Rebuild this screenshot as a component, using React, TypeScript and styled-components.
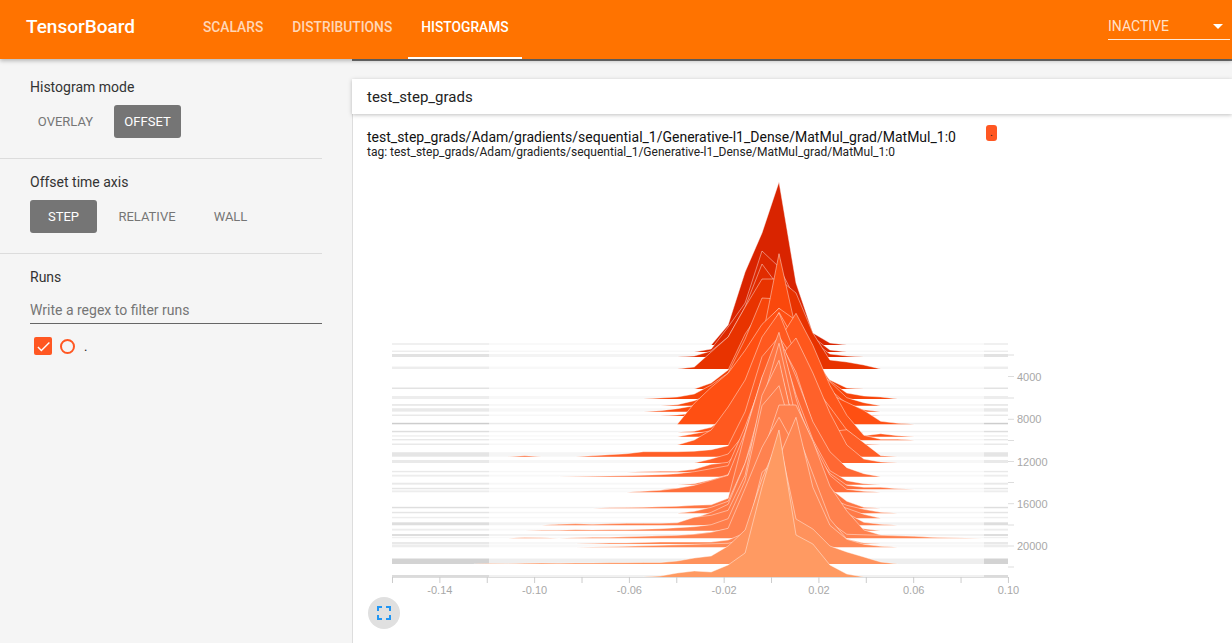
import React, { FC } from 'react'
import styled, { createGlobalStyle } from 'styled-components'
import { MdFullscreen, MdCheck } from 'react-icons/md'

const GlobalStyle = createGlobalStyle`
  html, body {
    margin: 0;
    padding: 0;
    height: 643px;
    overflow: hidden;
    background: #f5f5f5;
    font-family: Roboto, "Liberation Sans", sans-serif;
  }
`

const Page = styled.div`
  width: 1232px;
  height: 643px;
  display: flex;
  flex-direction: column;
  overflow: hidden;
`

const Header = styled.header`
  position: relative;
  z-index: 2;
  flex: none;
  height: 59px;
  background: #ff7300;
  display: flex;
  align-items: stretch;
  padding: 0 2px 0 26px;
  box-shadow: 0 2px 4px rgba(0, 0, 0, 0.25);
`

const Logo = styled.div`
  width: 164px;
  line-height: 54px;
  color: #fff;
  font-size: 19px;
  font-weight: 500;
`

const Tabs = styled.nav`
  display: flex;
  flex: 1;
`

const Tab = styled.a<{ $active?: boolean }>`
  padding: 0 13px;
  margin-right: 3px;
  line-height: 54px;
  height: 57px;
  font-size: 13.8px;
  font-weight: 500;
  color: ${p => (p.$active ? '#fff' : 'rgba(255, 255, 255, 0.72)')};
  border-bottom: 2px solid ${p => (p.$active ? '#fff' : 'transparent')};
`

const Select = styled.div`
  align-self: flex-start;
  margin-top: 16px;
  width: 122px;
  height: 24px;
  box-sizing: border-box;
  border-bottom: 1px solid rgba(255, 255, 255, 0.85);
  display: flex;
  justify-content: space-between;
  color: rgba(255, 255, 255, 0.8);
  font-size: 14px;
  line-height: 21px;
`

const Caret = styled.span`
  width: 0;
  height: 0;
  margin: 8px 7px 0 0;
  border-left: 5px solid transparent;
  border-right: 5px solid transparent;
  border-top: 5px solid #fff;
`

const Body = styled.div`
  flex: 1;
  display: flex;
  min-height: 0;
`

const Sidebar = styled.aside`
  flex: none;
  width: 352px;
  box-sizing: border-box;
  padding-right: 30px;
  background: #f5f5f5;
`

const Section = styled.section<{ $divider?: boolean }>`
  padding: 15px 0 15px 30px;
  height: 95px;
  box-sizing: border-box;
  border-bottom: ${p => (p.$divider ? '1px solid #dcdcdc' : 'none')};

  &:first-child {
    height: 100px;
    padding-top: 20px;
  }
`

const Label = styled.div`
  color: #333;
  font-size: 14px;
  line-height: 16px;
  margin-bottom: 10px;
`

const Buttons = styled.div<{ $gap: number }>`
  display: flex;
  gap: ${p => p.$gap}px;
`

const ModeButton = styled.div<{ $active?: boolean; $width?: number }>`
  width: ${p => p.$width ?? 67}px;
  height: 33px;
  line-height: 33px;
  text-align: center;
  border-radius: 3px;
  font-size: 13px;
  background: ${p => (p.$active ? '#757575' : 'transparent')};
  color: ${p => (p.$active ? '#fff' : '#757575')};
`

const FilterInput = styled.div`
  margin-top: 17px;
  height: 21px;
  font-size: 14px;
  line-height: 16px;
  color: #757575;
  border-bottom: 1px solid #666;
`

const RunRow = styled.div`
  display: flex;
  align-items: center;
  margin: 13px 0 0 4px;
  font-size: 13px;
  color: #222;
`

const CheckBox = styled.span`
  width: 18px;
  height: 18px;
  border-radius: 2px;
  background: #ff5722;
  color: #fff;
  display: flex;
  align-items: center;
  justify-content: center;
`

const RunDot = styled.span`
  width: 11px;
  height: 11px;
  margin: 0 9px 0 8px;
  border: 2px solid #ff5722;
  border-radius: 50%;
`

const Main = styled.main`
  flex: 1;
  min-width: 0;
  display: flex;
  flex-direction: column;
  padding-top: 18px;
  background: #f5f5f5;
  border-top: 2px solid #707070;
`

const SectionHeader = styled.div`
  position: relative;
  z-index: 1;
  flex: none;
  height: 35px;
  padding-left: 15px;
  background: #fff;
  font-size: 15px;
  line-height: 36px;
  color: #222;
  box-shadow: 0 1px 4px rgba(0, 0, 0, 0.25);
`

const Card = styled.div`
  flex: 1;
  background: #fff;
  border-left: 1px solid #ddd;
  min-height: 0;
`

const CardHead = styled.div`
  display: flex;
  align-items: flex-start;
  height: 51px;
  padding: 11px 0 0 14px;
  box-sizing: border-box;
`

const CardTitle = styled.div`
  width: 619px;
  padding-top: 4px;
  font-size: 14px;
  line-height: 16px;
  color: #111;
`

const CardTag = styled.div`
  font-size: 12px;
  line-height: 14px;
  color: #222;
  white-space: nowrap;
`

const RunChip = styled.span`
  width: 11px;
  height: 16px;
  background: #ff5722;
  border-radius: 3px;
  color: #222;
  font-size: 11px;
  line-height: 15px;
  text-align: center;
`

const ChartSvg = styled.svg`
  display: block;
  width: 879px;
  height: 436px;
`

const AxisText = styled.text`
  font-family: "Liberation Sans", Arial, sans-serif;
  font-size: 11px;
  fill: #a8a8a8;
`

const ExpandButton = styled.div`
  width: 32px;
  height: 32px;
  margin: -4px 0 0 15px;
  border-radius: 50%;
  background: #e0e0e0;
  color: #2196f3;
  display: flex;
  align-items: center;
  justify-content: center;
`

// heights of the histogram bins, `from` is the bin index relative to the centre (x = 779)
interface Ridge {
  y: number
  from: number
  h: number[]
  band?: [number, number]
}

const ridges: Ridge[] = [
  { y: 345, from: -4, h: [0, 20, 73, 112, 163, 62, 12, 2, 0], band: [2, 0.04] },
  { y: 352, from: -5, h: [0, 3, 25, 49, 101, 85, 52, 15, 2, 0], band: [1.5, 0.05] },
  { y: 357, from: -6, h: [0, 1, 6, 20, 50, 93, 70, 45, 16, 3, 1, 0], band: [3, 0.08] },
  { y: 369, from: -6, h: [0, 2, 17, 32, 62, 90, 90, 76, 36, 9, 7, 4, 0], band: [2.5, 0.05] },
  { y: 389, from: -5, h: [0, 6, 19, 55, 80, 85, 60, 25, 9, 1, 0], band: [1.5, 0.08] },
  { y: 399, from: -8, h: [0, 1, 2, 5, 14, 26, 60, 101, 100, 70, 45, 18, 6, 3, 2, 0], band: [3, 0.05] },
  { y: 405.7, from: -7, h: [0, 1, 5, 12, 28, 30, 66, 152, 76, 40, 24, 8, 3, 0], band: [1.5, 0.08] },
  { y: 411.7, from: -8, h: [0, 1, 3, 6, 14, 30, 60, 80, 90, 70, 40, 22, 8, 2, 0], band: [3.5, 0.06] },
  { y: 416, from: -7, h: [0, 1, 3, 8, 25, 52, 89, 108, 85, 50, 24, 10, 1, 0], band: [1.5, 0.06] },
  { y: 424.3, from: -6, h: [0, 21, 37, 51, 74, 100, 116, 104, 51, 30, 22, 14, 3, 1, 0], band: [1.5, 0.14] },
  { y: 432.3, from: -6, h: [0, 1, 5, 18, 46, 85, 120, 90, 55, 15, 2, 0], band: [1.5, 0.09] },
  { y: 436.7, from: -6, h: [0, 3, 6, 20, 42, 75, 100, 80, 45, 20, 8, 1, 3, 1, 0], band: [1.5, 0.05] },
  { y: 440.3, from: -5, h: [0, 4, 14, 32, 60, 100, 127, 95, 55, 25, 5, 1, 1, 0], band: [1, 0.09] },
  { y: 445, from: -6, h: [0, 5, 15, 38, 65, 108, 132, 90, 60, 38, 15, 1, 0], band: [1.5, 0.06] },
  { y: 456.7, from: -16, h: [0, 1, 0], band: [4.5, 0.07] },
  { y: 456.7, from: -12, h: [0, 1, 2, 3, 5, 5, 5, 5.5, 7, 11, 45, 100, 120, 95, 70, 25, 27, 14, 1, 0] },
  { y: 463, from: -5, h: [0, 4, 9, 30, 65, 105, 125, 90, 50, 18, 4, 1, 0], band: [3, 0.06] },
  { y: 472.3, from: -9, h: [0, 0.5, 1, 1, 3, 8, 10, 28, 90, 132, 100, 48, 12, 1, 0], band: [1.5, 0.06] },
  { y: 476.7, from: -13, h: [0, 0.3, 0.5, 0.8, 1, 1.5, 2, 3, 5, 8, 11, 50, 95, 140, 100, 55, 25, 9, 3, 0], band: [2, 0.05] },
  { y: 484.7, from: -6, h: [0, 1, 5, 10, 40, 85, 145, 90, 45, 14, 4, 1, 0], band: [2, 0.06] },
  { y: 489.3, from: -7, h: [0, 1, 3, 6, 14, 50, 110, 140, 80, 40, 16, 4, 2, 2, 0.5, 0], band: [1.5, 0.07] },
  { y: 492.3, from: -9, h: [0, 1, 2, 4, 7, 12, 17, 60, 115, 150, 90, 50, 17, 3, 1, 0], band: [2, 0.05] },
  { y: 508.3, from: -11, h: [0, 0.5, 0.8, 1, 1.5, 2, 3, 3.5, 10, 75, 131, 176, 110, 55, 20, 7, 1, 0], band: [1.5, 0.09] },
  { y: 513.3, from: -6, h: [0, 2, 6, 12, 50, 110, 170, 95, 50, 15, 8, 4, 1, 0], band: [1.5, 0.07] },
  { y: 518.3, from: -5, h: [0, 6, 14, 55, 105, 155, 85, 45, 15, 10, 4, 0], band: [1.5, 0.05] },
  { y: 525.3, from: -14, h: [0, 1, 1.5, 1, 1.5, 2, 2, 2, 2.5, 8, 10, 15, 50, 130, 165, 90, 45, 25, 12, 3, 1, 0], band: [3, 0.09] },
  { y: 530.7, from: -15, h: [0, 0.5, 0.5, 1, 0.8, 1, 1, 1.5, 2, 3, 4, 6, 12, 50, 125, 145, 85, 40, 20, 8, 2, 0], band: [2, 0.05] },
  { y: 536, from: -6, h: [0, 2, 4, 7, 14, 80, 131, 131, 95, 50, 25, 6, 1, 0], band: [2, 0.09] },
  { y: 538.3, from: -16, h: [0, 0.8, 0.5, 0, 0.5, 1, 1, 1.5, 2, 2.5, 3, 4, 6, 10, 50, 91, 121, 90, 50, 16, 4, 3.5, 3, 2.5, 2, 1, 0.5, 0.3, 0], band: [1.5, 0.04] },
  { y: 544, from: -12, h: [0, 0.5, 1, 1, 1.5, 2, 2, 2, 2, 4, 11, 25, 87, 115, 70, 25, 5, 1, 0], band: [2, 0.06] },
  { y: 547.3, from: -12, h: [0, 0.4, 0.6, 1, 1.5, 2, 2.5, 3, 3.5, 4, 8, 75, 90, 130, 60, 22, 8, 3, 1, 0], band: [3, 0.05] },
  { y: 564, from: -18, h: [0, 0.5, 0.3, 0.7, 0.9, 0.8, 1, 1, 1.2, 1.3, 1.5, 1.5, 3, 6, 8, 18, 34, 85, 125, 45, 35, 18, 12, 7, 2, 0], band: [5.5, 0.12] },
  { y: 577, from: -8, h: [0, 1, 4, 6, 5, 12, 24, 90, 147, 42, 33, 12, 3, 0], band: [2, 0.1] },
]

// colour goes from dark red at the oldest step to light orange at the newest
const colorStops: [number, number[]][] = [
  [345, [217, 36, 0]],
  [369, [232, 51, 0]],
  [405, [250, 72, 12]],
  [424, [255, 79, 18]],
  [492, [255, 111, 60]],
  [540, [255, 131, 80]],
  [577, [255, 154, 98]],
]

const ridgeColor = (y: number) => {
  let i = 0
  while (i < colorStops.length - 2 && y > colorStops[i + 1][0]) i++
  const [y0, c0] = colorStops[i]
  const [y1, c1] = colorStops[i + 1]
  const t = (y - y0) / (y1 - y0)
  return `rgb(${c0.map((c, k) => Math.round(c + (c1[k] - c) * t)).join(',')})`
}

const binX = (i: number) => 779 + i * 16.95

const RidgeShape: FC<{ ridge: Ridge }> = ({ ridge }) => {
  const { y, from, h, band } = ridge
  const top = h.map((v, i) => `${binX(from + i).toFixed(1)},${y - v}`).join(' ')
  const first = binX(from).toFixed(1)
  const last = binX(from + h.length - 1).toFixed(1)
  return (
    <g>
      {band && (
        <g fill="#000">
          <rect x={392} y={y - band[0]} width={616} height={band[0]} opacity={band[1] * 0.55} />
          <rect x={392} y={y - band[0]} width={97} height={band[0]} opacity={band[1] * 0.9} />
          <rect x={984} y={y - band[0]} width={24} height={band[0]} opacity={band[1] * 0.9} />
        </g>
      )}
      <polygon points={`${first},${y} ${top} ${last},${y}`} fill={ridgeColor(y)} />
      <polyline points={top} fill="none" stroke="#fff" strokeOpacity={0.55} strokeWidth={0.8} />
    </g>
  )
}

const xTicks = Array.from({ length: 14 }, (_, i) => i)
const yMajor = [
  { y: 376.5, label: '4000' },
  { y: 419.3, label: '8000' },
  { y: 461.5, label: '12000' },
  { y: 503.7, label: '16000' },
  { y: 546, label: '20000' },
]
const yMinor = [355, 398, 440.5, 482.5, 525, 567]

const Chart: FC = () => (
  <ChartSvg viewBox="353 165 879 436">
    {ridges.map((r, i) => (
      <RidgeShape key={i} ridge={r} />
    ))}
    <line x1={392.5} x2={1008.5} y1={577.5} y2={577.5} stroke="#ddd" />
    {xTicks.map(i => {
      const x = 392.5 + i * 47.38
      return <line key={i} x1={x} x2={x} y1={577} y2={583} stroke="#ccc" />
    })}
    {xTicks.filter(i => i % 2 === 1).map(i => {
      const v = -0.16 + i * 0.02
      return (
        <AxisText key={i} x={392.5 + i * 47.38} y={594} textAnchor="middle">
          {v.toFixed(2)}
        </AxisText>
      )
    })}
    {yMinor.map(y => (
      <line key={y} x1={1008} x2={1014} y1={y} y2={y} stroke="#ddd" />
    ))}
    {yMajor.map(t => (
      <g key={t.label}>
        <line x1={1008} x2={1014} y1={t.y} y2={t.y} stroke="#ddd" />
        <AxisText x={1017} y={t.y + 4}>
          {t.label}
        </AxisText>
      </g>
    ))}
  </ChartSvg>
)

const tagName = 'test_step_grads/Adam/gradients/sequential_1/Generative-l1_Dense/MatMul_grad/MatMul_1:0'

const App: FC = () => {
  return (
    <Page>
      <GlobalStyle />
      <Header>
        <Logo>TensorBoard</Logo>
        <Tabs>
          <Tab>SCALARS</Tab>
          <Tab>DISTRIBUTIONS</Tab>
          <Tab $active>HISTOGRAMS</Tab>
        </Tabs>
        <Select>
          INACTIVE
          <Caret />
        </Select>
      </Header>
      <Body>
        <Sidebar>
          <Section $divider>
            <Label>Histogram mode</Label>
            <Buttons $gap={13}>
              <ModeButton $width={71}>OVERLAY</ModeButton>
              <ModeButton $active>OFFSET</ModeButton>
            </Buttons>
          </Section>
          <Section $divider>
            <Label>Offset time axis</Label>
            <Buttons $gap={16.5}>
              <ModeButton $active>STEP</ModeButton>
              <ModeButton>RELATIVE</ModeButton>
              <ModeButton>WALL</ModeButton>
            </Buttons>
          </Section>
          <Section>
            <Label>Runs</Label>
            <FilterInput>Write a regex to filter runs</FilterInput>
            <RunRow>
              <CheckBox>
                <MdCheck size={17} />
              </CheckBox>
              <RunDot />.
            </RunRow>
          </Section>
        </Sidebar>
        <Main>
          <SectionHeader>test_step_grads</SectionHeader>
          <Card>
            <CardHead>
              <CardTitle>
                {tagName}
                <CardTag>tag: {tagName}</CardTag>
              </CardTitle>
              <RunChip>.</RunChip>
            </CardHead>
            <Chart />
            <ExpandButton>
              <MdFullscreen size={24} />
            </ExpandButton>
          </Card>
        </Main>
      </Body>
    </Page>
  )
}

export default App
